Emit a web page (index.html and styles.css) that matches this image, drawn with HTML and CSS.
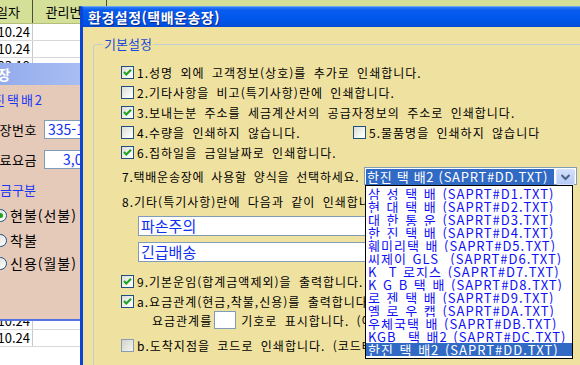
FILE: index.html
```html
<!DOCTYPE html>
<html lang="ko">
<head>
    <meta charset="UTF-8">
    <title>환경설정(택배운송장)</title>
    <link rel="stylesheet" href="styles.css">
</head>
<body>
    <!-- list window behind the dialogs -->
    <div class="sheet">
        <div class="sheet-row sheet-head"><div class="cell c1">발송일자</div><div class="cell c2">관리번호</div><div class="cell"></div></div>
        <div class="sheet-row"><div class="cell c1">2009.10.24</div><div class="cell c2"></div><div class="cell"></div></div>
        <div class="sheet-row"><div class="cell c1">2009.10.24</div><div class="cell c2"></div><div class="cell"></div></div>
        <div class="sheet-row"><div class="cell c1">2009.03.19</div><div class="cell c2"></div><div class="cell"></div></div>
        <div class="sheet-row"><div class="cell c1">2009.03.19</div><div class="cell c2"></div><div class="cell"></div></div>
        <div class="sheet-row"><div class="cell c1">2009.03.19</div><div class="cell c2"></div><div class="cell"></div></div>
        <div class="sheet-row"><div class="cell c1">2009.03.19</div><div class="cell c2"></div><div class="cell"></div></div>
        <div class="sheet-row"><div class="cell c1">2009.03.19</div><div class="cell c2"></div><div class="cell"></div></div>
        <div class="sheet-row"><div class="cell c1">2009.03.19</div><div class="cell c2"></div><div class="cell"></div></div>
        <div class="sheet-row"><div class="cell c1">2009.03.19</div><div class="cell c2"></div><div class="cell"></div></div>
        <div class="sheet-row"><div class="cell c1">2009.03.19</div><div class="cell c2"></div><div class="cell"></div></div>
        <div class="sheet-row"><div class="cell c1">2009.03.19</div><div class="cell c2"></div><div class="cell"></div></div>
        <div class="sheet-row"><div class="cell c1">2009.03.19</div><div class="cell c2"></div><div class="cell"></div></div>
        <div class="sheet-row"><div class="cell c1">2009.03.19</div><div class="cell c2"></div><div class="cell"></div></div>
        <div class="sheet-row"><div class="cell c1">2009.03.19</div><div class="cell c2"></div><div class="cell"></div></div>
        <div class="sheet-row"><div class="cell c1">2009.03.19</div><div class="cell c2"></div><div class="cell"></div></div>
        <div class="sheet-row"><div class="cell c1">2009.03.19</div><div class="cell c2"></div><div class="cell"></div></div>
        <div class="sheet-row"><div class="cell c1">2009.10.24</div><div class="cell c2"></div><div class="cell"></div></div>
        <div class="sheet-row"><div class="cell c1">2009.10.24</div><div class="cell c2"></div><div class="cell"></div></div>
        <div class="sheet-row"><div class="cell c1">2009.10.24</div><div class="cell c2"></div><div class="cell"></div></div>
    </div>

    <!-- inactive dialog on the left -->
    <div class="win win-back">
        <div class="win-title">택배운송장</div>
        <div class="b-name">한진택배2</div>
        <div class="b-field"><span class="b-label">송장번호</span><span class="b-input">335-1234</span></div>
        <div class="b-field b-field2"><span class="b-label">운송료요금</span><span class="b-input right">3,000</span></div>
        <div class="b-caption">요금구분</div>
        <div class="b-radio first"><span class="radio on"></span>현불(선불)</div>
        <div class="b-radio"><span class="radio"></span>착불</div>
        <div class="b-radio last"><span class="radio"></span>신용(월불)</div>
    </div>

    <!-- active dialog -->
    <div class="win win-main">
        <div class="win-title">환경설정(택배운송장)</div>
        <fieldset class="group">
            <legend>기본설정</legend>

            <div class="opt"><span class="chk on"><svg viewBox="0 0 11 11"><polyline points="2,5 4.3,7.5 9,2.8"/></svg></span>1.성명 외에 고객정보(상호)를 추가로 인쇄합니다.</div>
            <div class="opt"><span class="chk"></span>2.기타사항을 비고(특기사항)란에 인쇄합니다.</div>
            <div class="opt"><span class="chk on"><svg viewBox="0 0 11 11"><polyline points="2,5 4.3,7.5 9,2.8"/></svg></span>3.보내는분 주소를 세금계산서의 공급자정보의 주소로 인쇄합니다.</div>
            <div class="opt">
                <span class="opt-half"><span class="chk"></span>4.수량을 인쇄하지 않습니다.</span>
                <span class="chk"></span>5.물품명을 인쇄하지 않습니다
            </div>
            <div class="opt"><span class="chk on"><svg viewBox="0 0 11 11"><polyline points="2,5 4.3,7.5 9,2.8"/></svg></span>6.집하일을 금일날짜로 인쇄합니다.</div>

            <div class="opt sel-row">
                <span class="sel-label">7.택배운송장에 사용할 양식을 선택하세요.</span>
                <div class="select">
                    <span class="sel-value">한진 택 배2 (SAPRT#DD.TXT)</span>
                    <span class="sel-btn"><svg viewBox="0 0 17 14"><polyline points="4.5,5 8.5,9 12.5,5"/></svg></span>
                    <ul class="sel-list">
                        <li>삼 성 택 배 (SAPRT#D1.TXT)</li>
                        <li>현 대 택 배 (SAPRT#D2.TXT)</li>
                        <li>대 한 통 운 (SAPRT#D3.TXT)</li>
                        <li>한 진 택 배 (SAPRT#D4.TXT)</li>
                        <li>훼미리택 배 (SAPRT#D5.TXT)</li>
                        <li>씨제이 GLS  (SAPRT#D6.TXT)</li>
                        <li>K  T 로지스 (SAPRT#D7.TXT)</li>
                        <li>K G B 택 배 (SAPRT#D8.TXT)</li>
                        <li>로 젠 택 배 (SAPRT#D9.TXT)</li>
                        <li>옐 로 우 캡 (SAPRT#DA.TXT)</li>
                        <li>우체국택 배 (SAPRT#DB.TXT)</li>
                        <li>KGB  택 배2 (SAPRT#DC.TXT)</li>
                        <li class="picked">한진 택 배2 (SAPRT#DD.TXT)</li>
                    </ul>
                </div>
            </div>

            <div class="opt opt-8">8.기타(특기사항)란에 다음과 같이 인쇄합니다.</div>
            <div class="memo">파손주의</div>
            <div class="memo memo2">긴급배송</div>

            <div class="opt opt-9"><span class="chk on"><svg viewBox="0 0 11 11"><polyline points="2,5 4.3,7.5 9,2.8"/></svg></span>9.기본운임(합계금액제외)을 출력합니다.</div>
            <div class="opt"><span class="chk on"><svg viewBox="0 0 11 11"><polyline points="2,5 4.3,7.5 9,2.8"/></svg></span>a.요금관계(현금,착불,신용)를 출력합니다.</div>
            <div class="opt sub">요금관계를<span class="sym"></span>기호로 표시합니다. (예: ★)</div>
            <div class="opt opt-b"><span class="chk dim"></span>b.도착지점을 코드로 인쇄합니다. (코드테이블 참조)</div>
        </fieldset>
    </div>
</body>
</html>
```

FILE: styles.css
```css
* {
    box-sizing: border-box;
}
body {
    margin: 0;
    width: 580px;
    height: 365px;
    overflow: hidden;
    position: relative;
    background: #fff;
    font-family: "Noto Sans CJK KR", sans-serif;
    font-size: 12px;
    color: #000;
}

/* list window */
.sheet {
    margin-left: -40px;
    width: 660px;
    font-size: 13px;
}
.sheet-row {
    display: grid;
    grid-template-columns: 73px 74px 1fr;
    height: 17px;
    line-height: 16px;
    border-bottom: 1px solid #d8d8d8;
}
.sheet-head {
    height: 24px;
    line-height: 23px;
    background: #d4e098;
    border-bottom: 1px solid #b4bf7c;
}
.cell {
    padding: 0 2px;
    border-right: 1px solid #c8c8c8;
    white-space: nowrap;
    overflow: hidden;
}
.sheet-row .c1 {
    text-align: right;
}
.sheet-head .cell {
    text-align: center;
    border-right-color: #4a4e38;
}

/* windows */
.win {
    position: absolute;
}
.win-title {
    color: #fff;
    font-weight: bold;
    font-size: 14px;
    white-space: nowrap;
}

.win-back {
    left: -110px;
    top: 63px;
    width: 194px;
    height: 258px;
    background: #e6cab9;
    border-bottom: 2px solid #5572e2;
    font-size: 13px;
}
.win-back .win-title {
    height: 22px;
    line-height: 22px;
    padding-left: 56px;
    background: linear-gradient(to right, #7794e6, #a9bef2);
}
.b-name {
    margin: 7px 0 0 89px;
    height: 16px;
    line-height: 16px;
    letter-spacing: 2px;
    color: #1838f4;
}
.b-field {
    display: flex;
    align-items: center;
    gap: 7px;
    height: 19px;
    margin-top: 12px;
    white-space: nowrap;
}
.b-field2 {
    margin-top: 11px;
}
.b-label {
    flex: none;
    width: 147px;
    text-align: right;
    letter-spacing: 0.5px;
}
.b-input {
    flex: none;
    width: 58px;
    height: 19px;
    padding: 0 3px;
    border: 1px solid #7f9db9;
    background: #fff;
    color: #1030f0;
    font-size: 14px;
    line-height: 17px;
    overflow: hidden;
}
.b-input.right {
    text-align: right;
}
.b-caption {
    margin: 13px 0 0 98px;
    height: 16px;
    line-height: 16px;
    color: #1838f4;
}
.b-radio {
    display: flex;
    align-items: center;
    gap: 3px;
    height: 16px;
    margin: 9px 0 0 104px;
    white-space: nowrap;
    font-size: 14px;
    letter-spacing: 1px;
}
.b-radio.last {
    margin-top: 7px;
}
.radio {
    flex: none;
    width: 13px;
    height: 13px;
    border-radius: 50%;
    border: 1px solid #1c5180;
    background: linear-gradient(135deg, #dcdcd7, #fff);
    display: flex;
    align-items: center;
    justify-content: center;
}
.radio.on::after {
    content: "";
    width: 5px;
    height: 5px;
    border-radius: 50%;
    background: #21a121;
}

.win-main {
    left: 80px;
    top: 6px;
    width: 520px;
    height: 370px;
    background: #efe2a0;
    border-left: 3px solid #0a45d6;
    border-top: 1px solid #6aa4f6;
}
.win-main .win-title {
    height: 20px;
    line-height: 20px;
    padding-left: 5px;
    letter-spacing: 0.5px;
    background: linear-gradient(#2c7ff4 0, #0a5cf0 3px, #0056ea 12px, #0050df 18px, #0a48cc 20px);
    text-shadow: 1px 1px #0a2a8c;
}

/* group box */
.group {
    margin: 9px 0 0 10px;
    padding: 10px 0 40px 0;
    border: 1px solid #c2ccd9;
    border-radius: 3px;
    min-width: 0;
}
.group legend {
    margin-left: 9px;
    padding: 0 1px;
    height: 16px;
    line-height: 16px;
    font-size: 13px;
    color: #1a48d8;
}

.opt {
    display: flex;
    align-items: center;
    height: 20px;
    margin-left: 27px;
    white-space: nowrap;
    letter-spacing: 1px;
    word-spacing: 3px;
}
.opt-half {
    display: flex;
    align-items: center;
    width: 232px;
}
.chk {
    flex: none;
    width: 13px;
    height: 13px;
    margin-right: 3px;
    border: 1px solid #1c5180;
    background: linear-gradient(135deg, #dcdcd7, #fbfbf9 80%);
    display: flex;
}
.chk svg {
    width: 11px;
    height: 11px;
}
.chk polyline {
    fill: none;
    stroke: #21a121;
    stroke-width: 2;
}
.chk.dim {
    border-color: #8b9cb2;
    background: linear-gradient(135deg, #d2d2cc, #efefea 80%);
}

/* combo box */
.sel-row {
    height: 24px;
    margin-top: 2px;
}
.sel-label {
    flex: none;
    width: 243px;
    padding-left: 1px;
    letter-spacing: 0.75px;
}
.select {
    position: relative;
    display: flex;
    flex: none;
    width: 213px;
    height: 18px;
    padding: 1px;
    border: 1px solid #7f9db9;
    background: #fff;
    letter-spacing: 1px;
    word-spacing: 1px;
}
.sel-value {
    width: 188px;
    height: 16px;
    line-height: 15px;
    padding-left: 1px;
    background: #316ac5;
    color: #fff;
    font-size: 13px;
    letter-spacing: 0.7px;
    word-spacing: 0;
    white-space: pre;
    overflow: hidden;
}
.sel-btn {
    width: 19px;
    height: 16px;
    margin-left: 2px;
    border: 1px solid #d6e0fb;
    border-radius: 2px;
    background: linear-gradient(#d2defc, #b7cbf8);
}
.sel-btn svg {
    display: block;
    width: 17px;
    height: 14px;
}
.sel-btn polyline {
    fill: none;
    stroke: #4d6185;
    stroke-width: 2;
}
.sel-list {
    position: absolute;
    top: 17px;
    left: 0;
    z-index: 2;
    width: 208px;
    height: 174px;
    margin: 0;
    padding: 1px 0 2px 0;
    list-style: none;
    border: 1px solid #000;
    background: #fff;
}
.sel-list li {
    height: 13px;
    line-height: 13px;
    padding-left: 2px;
    color: #1010f8;
    font-size: 13px;
    white-space: pre;
    overflow: hidden;
}
.sel-list li.picked {
    background: #316ac5;
    color: #fff;
}

.opt-8 {
    margin-top: 3px;
    padding-left: 1px;
}
.memo {
    width: 290px;
    height: 20px;
    margin: 5px 0 0 44px;
    padding-left: 2px;
    border: 1px solid #7f9db9;
    background: #fff;
    color: #1030f0;
    font-size: 15px;
    line-height: 18px;
}
.memo2 {
    margin-top: 6px;
}
.opt-9 {
    margin-top: 9px;
}
.sub {
    height: 18px;
    margin-left: 58px;
}
.sym {
    flex: none;
    width: 22px;
    height: 18px;
    margin: 0 5px 0 2px;
    border: 1px solid #7f9db9;
    background: #fff;
}
.opt-b {
    margin-top: 6px;
}
```
